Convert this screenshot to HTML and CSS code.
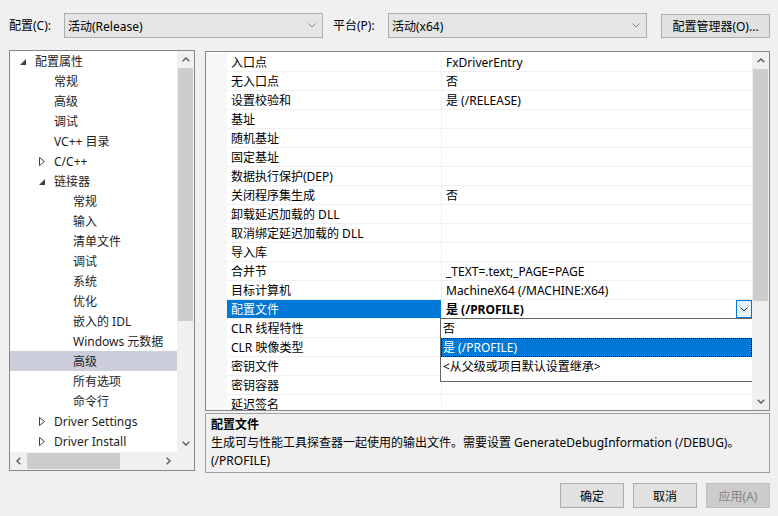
FILE: index.html
```html
<!DOCTYPE html>
<html lang="zh-CN">
<head>
    <meta charset="UTF-8">
    <meta name="viewport" content="width=device-width, initial-scale=1.0">
    <title>链接器 - 高级 属性页</title>
    <link rel="stylesheet" href="styles.css">
</head>
<body>
    <div class="toolbar">
        <span class="tb-label">配置(C):</span>
        <div class="combo">
            <span class="combo-text">活动(Release)</span>
            <svg class="combo-chev" width="8" height="5" viewBox="0 0 8 5"><polyline points="0.5,0.5 4,4 7.5,0.5" fill="none" stroke="#808080" stroke-width="1"/></svg>
        </div>
        <span class="tb-label tb-platform">平台(P):</span>
        <div class="combo">
            <span class="combo-text">活动(x64)</span>
            <svg class="combo-chev" width="8" height="5" viewBox="0 0 8 5"><polyline points="0.5,0.5 4,4 7.5,0.5" fill="none" stroke="#808080" stroke-width="1"/></svg>
        </div>
        <button class="btn btn-manager">配置管理器(O)...</button>
    </div>

    <div class="main">
        <div class="tree">
            <div class="tree-body">
                <ul class="tree-list">
                    <li class="node lvl0"><span class="exp"><svg width="6" height="6" viewBox="0 0 6 6"><polygon points="6,0 6,6 0,6" fill="#404040"/></svg></span>配置属性</li>
                    <li class="node lvl1"><span class="exp"></span>常规</li>
                    <li class="node lvl1"><span class="exp"></span>高级</li>
                    <li class="node lvl1"><span class="exp"></span>调试</li>
                    <li class="node lvl1"><span class="exp"></span>VC++ 目录</li>
                    <li class="node lvl1"><span class="exp"><svg width="6" height="9" viewBox="0 0 6 9"><polygon points="0.5,0.5 5.5,4.5 0.5,8.5" fill="none" stroke="#404040" stroke-width="1"/></svg></span>C/C++</li>
                    <li class="node lvl1"><span class="exp"><svg width="6" height="6" viewBox="0 0 6 6"><polygon points="6,0 6,6 0,6" fill="#404040"/></svg></span>链接器</li>
                    <li class="node lvl2"><span class="exp"></span>常规</li>
                    <li class="node lvl2"><span class="exp"></span>输入</li>
                    <li class="node lvl2"><span class="exp"></span>清单文件</li>
                    <li class="node lvl2"><span class="exp"></span>调试</li>
                    <li class="node lvl2"><span class="exp"></span>系统</li>
                    <li class="node lvl2"><span class="exp"></span>优化</li>
                    <li class="node lvl2"><span class="exp"></span>嵌入的 IDL</li>
                    <li class="node lvl2"><span class="exp"></span>Windows 元数据</li>
                    <li class="node lvl2 selected"><span class="exp"></span>高级</li>
                    <li class="node lvl2"><span class="exp"></span>所有选项</li>
                    <li class="node lvl2"><span class="exp"></span>命令行</li>
                    <li class="node lvl1"><span class="exp"><svg width="6" height="9" viewBox="0 0 6 9"><polygon points="0.5,0.5 5.5,4.5 0.5,8.5" fill="none" stroke="#404040" stroke-width="1"/></svg></span>Driver Settings</li>
                    <li class="node lvl1"><span class="exp"><svg width="6" height="9" viewBox="0 0 6 9"><polygon points="0.5,0.5 5.5,4.5 0.5,8.5" fill="none" stroke="#404040" stroke-width="1"/></svg></span>Driver Install</li>
                </ul>
                <div class="vscroll tree-vscroll">
                    <div class="sb-arrow"><svg width="8" height="5" viewBox="0 0 8 5"><polyline points="0.7,4.3 4,1 7.3,4.3" fill="none" stroke="#606060" stroke-width="1.5"/></svg></div>
                    <div class="sb-track"><div class="sb-thumb tree-vthumb"></div></div>
                    <div class="sb-arrow"><svg width="8" height="5" viewBox="0 0 8 5"><polyline points="0.7,0.7 4,4 7.3,0.7" fill="none" stroke="#606060" stroke-width="1.5"/></svg></div>
                </div>
            </div>
            <div class="hscroll">
                <div class="hscroll-bar">
                    <div class="sb-harrow"><svg width="5" height="8" viewBox="0 0 5 8"><polyline points="4.3,0.7 1,4 4.3,7.3" fill="none" stroke="#606060" stroke-width="1.5"/></svg></div>
                    <div class="sb-htrack"><div class="sb-hthumb"></div></div>
                    <div class="sb-harrow"><svg width="5" height="8" viewBox="0 0 5 8"><polyline points="0.7,0.7 4,4 0.7,7.3" fill="none" stroke="#606060" stroke-width="1.5"/></svg></div>
                </div>
                <div class="sb-corner"></div>
            </div>
        </div>

        <div class="right">
            <div class="grid">
                <div class="grid-rows">
                    <div class="row"><div class="gutter"></div><div class="name">入口点</div><div class="value">FxDriverEntry</div></div>
                    <div class="row"><div class="gutter"></div><div class="name">无入口点</div><div class="value">否</div></div>
                    <div class="row"><div class="gutter"></div><div class="name">设置校验和</div><div class="value">是 (/RELEASE)</div></div>
                    <div class="row"><div class="gutter"></div><div class="name">基址</div><div class="value"></div></div>
                    <div class="row"><div class="gutter"></div><div class="name">随机基址</div><div class="value"></div></div>
                    <div class="row"><div class="gutter"></div><div class="name">固定基址</div><div class="value"></div></div>
                    <div class="row"><div class="gutter"></div><div class="name">数据执行保护(DEP)</div><div class="value"></div></div>
                    <div class="row"><div class="gutter"></div><div class="name">关闭程序集生成</div><div class="value">否</div></div>
                    <div class="row"><div class="gutter"></div><div class="name">卸载延迟加载的 DLL</div><div class="value"></div></div>
                    <div class="row"><div class="gutter"></div><div class="name">取消绑定延迟加载的 DLL</div><div class="value"></div></div>
                    <div class="row"><div class="gutter"></div><div class="name">导入库</div><div class="value"></div></div>
                    <div class="row"><div class="gutter"></div><div class="name">合并节</div><div class="value">_TEXT=.text;_PAGE=PAGE</div></div>
                    <div class="row"><div class="gutter"></div><div class="name">目标计算机</div><div class="value">MachineX64 (/MACHINE:X64)</div></div>
                    <div class="row active"><div class="gutter"></div><div class="name">配置文件</div><div class="value"><span class="value-text">是 (/PROFILE)</span><span class="drop-btn"><svg width="8" height="5" viewBox="0 0 8 5"><polyline points="0.5,0.5 4,4 7.5,0.5" fill="none" stroke="#333" stroke-width="1"/></svg></span></div></div>
                    <div class="row"><div class="gutter"></div><div class="name">CLR 线程特性</div><div class="value"></div></div>
                    <div class="row"><div class="gutter"></div><div class="name">CLR 映像类型</div><div class="value"></div></div>
                    <div class="row"><div class="gutter"></div><div class="name">密钥文件</div><div class="value"></div></div>
                    <div class="row"><div class="gutter"></div><div class="name">密钥容器</div><div class="value"></div></div>
                    <div class="row"><div class="gutter"></div><div class="name">延迟签名</div><div class="value"></div></div>

                    <ul class="dropdown">
                        <li>否</li>
                        <li class="picked">是 (/PROFILE)</li>
                        <li>&lt;从父级或项目默认设置继承&gt;</li>
                    </ul>
                </div>
                <div class="vscroll grid-vscroll">
                    <div class="sb-arrow"><svg width="8" height="5" viewBox="0 0 8 5"><polyline points="0.7,4.3 4,1 7.3,4.3" fill="none" stroke="#606060" stroke-width="1.5"/></svg></div>
                    <div class="sb-track"><div class="sb-thumb grid-vthumb"></div></div>
                    <div class="sb-arrow"><svg width="8" height="5" viewBox="0 0 8 5"><polyline points="0.7,0.7 4,4 7.3,0.7" fill="none" stroke="#606060" stroke-width="1.5"/></svg></div>
                </div>
            </div>

            <div class="desc">
                <div class="desc-title">配置文件</div>
                <div class="desc-text">生成可与性能工具探查器一起使用的输出文件。需要设置 GenerateDebugInformation (/DEBUG)。<br>(/PROFILE)</div>
            </div>
        </div>
    </div>

    <div class="footer">
        <button class="btn">确定</button>
        <button class="btn">取消</button>
        <button class="btn" disabled>应用(A)</button>
    </div>
</body>
</html>
```

FILE: styles.css
```css
* {
    box-sizing: border-box;
}
body {
    margin: 0;
    width: 778px;
    height: 516px;
    overflow: hidden;
    background: #f0f0f0;
    font-family: "Segoe UI", "Noto Sans", "Noto Sans CJK SC", sans-serif;
    font-size: 12px;
    color: #000;
}
ul {
    list-style: none;
    margin: 0;
    padding: 0;
}

.toolbar {
    display: flex;
    align-items: center;
    padding: 13px 0 0 9px;
    height: 38px;
}
.tb-label {
    width: 55px;
    line-height: 25px;
}
.tb-platform {
    margin-left: 10px;
}
.combo {
    width: 259px;
    height: 25px;
    display: flex;
    align-items: center;
    background: #e5e5e5;
    border: 1px solid #acacac;
    padding: 0 6px 0 3px;
}
.combo-text {
    flex: 1;
}
.btn {
    font-family: inherit;
    font-size: 12px;
    color: #000;
    background: #e1e1e1;
    border: 1px solid #adadad;
    padding: 0;
    height: 25px;
    width: 64px;
}
.btn:disabled {
    background: #cccccc;
    border-color: #bfbfbf;
    color: #838383;
}
.btn-manager {
    margin-left: 14px;
    width: 109px;
    height: 24px;
}

.main {
    display: flex;
    padding-left: 9px;
    margin-top: 12px;
}
.tree {
    width: 186px;
    height: 421px;
    border: 1px solid #828790;
    background: #fff;
    display: flex;
    flex-direction: column;
}
.tree-body {
    display: flex;
    height: 401px;
}
.tree-list {
    flex: 1;
    overflow: hidden;
}
.node {
    height: 20px;
    padding-top: 1px;
    line-height: 19px;
    display: flex;
    align-items: center;
    white-space: nowrap;
    color: #1e1e1e;
}
.node.lvl0 {
    padding-left: 6px;
}
.node.lvl1 {
    padding-left: 25px;
}
.node.lvl2 {
    padding-left: 44px;
}
.node.selected {
    background: #cccedb;
}
.exp {
    width: 19px;
    height: 19px;
    display: flex;
    align-items: center;
    padding-left: 4px;
}

.vscroll {
    width: 17px;
    background: #f0f0f0;
    display: flex;
    flex-direction: column;
}
.sb-arrow {
    height: 17px;
    display: flex;
    align-items: center;
    justify-content: center;
}
.sb-track {
    flex: 1;
    padding: 0 1px;
}
.sb-thumb {
    background: #cdcdcd;
    height: 100%;
}
.tree-vthumb {
    height: 253px;
}
.grid-vthumb {
    height: 232px;
}
.hscroll {
    display: flex;
    height: 18px;
}
.hscroll-bar {
    flex: 1;
    display: flex;
    background: #f0f0f0;
}
.sb-harrow {
    width: 17px;
    display: flex;
    align-items: center;
    justify-content: center;
}
.sb-htrack {
    flex: 1;
    padding: 1px 0;
}
.sb-hthumb {
    width: 93px;
    height: 100%;
    background: #cdcdcd;
}
.sb-corner {
    width: 17px;
    background: #f0f0f0;
}

.right {
    margin-left: 10px;
    margin-top: 1px;
    width: 565px;
}
.grid {
    height: 360px;
    border: 1px solid #828790;
    background: #fff;
    display: flex;
}
.grid-rows {
    flex: 1;
    position: relative;
    overflow: hidden;
    padding-top: 1px;
}
.row {
    display: flex;
    height: 19px;
    white-space: nowrap;
}
.gutter {
    width: 21px;
    background: #f7f7f7;
}
.name {
    width: 215px;
    padding: 1px 0 0 4px;
    line-height: 17px;
    border-right: 1px solid #f0f0f0;
    border-bottom: 1px solid #f0f0f0;
}
.value {
    flex: 1;
    padding: 1px 0 0 4px;
    line-height: 17px;
    border-bottom: 1px solid #f0f0f0;
    display: flex;
    align-items: center;
}
.row.active .name {
    background: #0078d7;
    color: #fff;
}
.row.active .value {
    font-weight: bold;
    padding-top: 0;
}
.value-text {
    flex: 1;
    padding-top: 1px;
}
.drop-btn {
    width: 16px;
    height: 18px;
    border: 1px solid #0078d7;
    background: #e5f1fb;
    display: flex;
    align-items: center;
    justify-content: center;
}
.dropdown {
    position: absolute;
    left: 234px;
    top: 266px;
    width: 313px;
    height: 64px;
    background: #fff;
    border: 1px solid #646464;
}
.dropdown li {
    height: 19px;
    line-height: 19px;
    padding: 1px 0 0 2px;
    line-height: 18px;
    white-space: nowrap;
}
.dropdown li.picked {
    background: #0078d7;
    color: #fff;
    outline: 1px dotted #000;
    outline-offset: -1px;
}

.desc {
    margin-top: 2px;
    height: 60px;
    border: 1px solid #a0a0a0;
    padding: 2px 5px 0;
    line-height: 18px;
}
.desc-title {
    font-weight: bold;
}

.footer {
    display: flex;
    justify-content: flex-end;
    gap: 9px;
    padding-right: 8px;
    margin-top: 10px;
}
```
